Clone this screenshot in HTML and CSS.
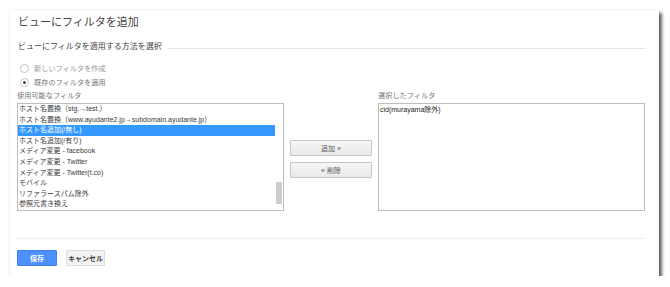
FILE: index.html
```html
<!DOCTYPE html>
<html lang="ja">
<head>
    <meta charset="UTF-8">
    <meta name="viewport" content="width=device-width, initial-scale=1.0">
    <title>ビューにフィルタを追加</title>
    <link rel="stylesheet" href="styles.css">
</head>
<body>

    <div class="dialog">
        <h1 class="dialog-title">ビューにフィルタを追加</h1>

        <!-- Section heading -->
        <div class="section-head">
            <span>ビューにフィルタを適用する方法を選択</span>
            <div class="section-line"></div>
        </div>

        <!-- Options -->
        <label class="radio-row disabled">
            <span class="radio"></span>
            新しいフィルタを作成
        </label>
        <label class="radio-row">
            <span class="radio checked"></span>
            既存のフィルタを適用
        </label>

        <!-- Filter lists -->
        <div class="lists">
            <div class="list-col">
                <div class="list-label">使用可能なフィルタ</div>
                <div class="listbox">
                    <ul class="options">
                        <li>ホスト名置換（stg.→test.）</li>
                        <li>ホスト名置換（www.ayudante2.jp→subdomain.ayudante.jp）</li>
                        <li class="selected">ホスト名追加(/無し)</li>
                        <li>ホスト名追加(/有り)</li>
                        <li>メディア変更 - facebook</li>
                        <li>メディア変更 - Twitter</li>
                        <li>メディア変更 - Twitter(t.co)</li>
                        <li>モバイル</li>
                        <li>リファラースパム除外</li>
                        <li>参照元書き換え</li>
                    </ul>
                    <div class="scrollbar">
                        <div class="thumb"></div>
                    </div>
                </div>
            </div>

            <div class="move-buttons">
                <button class="move-btn">追加 »</button>
                <button class="move-btn">« 削除</button>
            </div>

            <div class="list-col">
                <div class="list-label">選択したフィルタ</div>
                <div class="listbox">
                    <ul class="options chosen">
                        <li>cid(murayama除外)</li>
                    </ul>
                </div>
            </div>
        </div>

        <div class="divider"></div>

        <!-- Footer -->
        <div class="footer">
            <button class="btn btn-save">保存</button>
            <button class="btn btn-cancel">キャンセル</button>
        </div>
    </div>

</body>
</html>
```

FILE: styles.css
```css
body {
    font-family: "Liberation Sans", "Noto Sans CJK JP", sans-serif;
    margin: 0;
    padding: 0;
    background: #fff;
}
.dialog {
    box-sizing: border-box;
    width: 649px;
    height: 266px;
    margin: 10px 0 0 10px;
    padding: 4px 14px 0 7px;
    background: #fff;
    box-shadow: 0 0 2px rgba(0, 0, 0, 0.15), 3px 3px 3px rgba(0, 0, 0, 0.6);
}
.dialog-title {
    margin: 0 0 0 1px;
    font-size: 11px;
    line-height: 16px;
    font-weight: normal;
    color: #444;
}

/* Section heading with rule */
.section-head {
    display: flex;
    align-items: center;
    margin-top: 9px;
    height: 12px;
    font-size: 8px;
    color: #444;
    padding-left: 1px;
}
.section-line {
    flex: 1;
    height: 1px;
    background: #e3e3e3;
    margin: 6px 0 0 6px;
}

/* Radios */
.radio-row {
    display: flex;
    align-items: center;
    height: 14px;
    font-size: 7.2px;
    color: #777;
    padding-left: 3px;
}
.radio-row:first-of-type {
    margin-top: 10px;
}
.radio-row.disabled {
    color: #9a9a9a;
}
.radio {
    box-sizing: border-box;
    width: 9px;
    height: 9px;
    border: 1px solid #c4c4c4;
    border-radius: 50%;
    margin-right: 5px;
    display: flex;
    align-items: center;
    justify-content: center;
}
.radio.checked::after {
    content: "";
    width: 3px;
    height: 3px;
    border-radius: 50%;
    background: #444;
}

/* Lists */
.lists {
    display: flex;
    margin-top: 2px;
}
.list-col {
    width: 267px;
}
.list-label {
    height: 10px;
    line-height: 10px;
    font-size: 7.2px;
    color: #777;
    margin-bottom: 2px;
}
.listbox {
    box-sizing: border-box;
    display: flex;
    height: 108px;
    border: 1px solid #bdbdbd;
    background: #fff;
}
.options {
    list-style: none;
    flex: 1;
    margin: 0 1px 0 0;
    padding: 0;
    overflow: hidden;
    font-size: 7px;
    color: #3a3a3a;
}
.options li {
    height: 10.6px;
    line-height: 10.6px;
    padding-left: 1px;
    white-space: nowrap;
}
.options li.selected {
    background-color: #3399ff;
    color: #fff;
}
.options.chosen li {
    line-height: 12px;
    color: #222;
}
.scrollbar {
    width: 6px;
    margin-right: 1px;
}
.thumb {
    height: 22px;
    margin-top: 78px;
    background: #cdcdcd;
}

/* Move buttons */
.move-buttons {
    width: 94px;
    padding: 49px 6px 0;
    box-sizing: border-box;
    display: flex;
    flex-direction: column;
    gap: 6px;
}
.move-btn {
    height: 16px;
    padding: 0;
    border: 1px solid #c6c6c6;
    border-radius: 1px;
    background: linear-gradient(#f6f6f6, #e9e9e9);
    font-family: inherit;
    font-size: 7px;
    color: #555;
}

.divider {
    height: 1px;
    background: #ebebeb;
    margin-top: 27px;
}

/* Footer buttons */
.footer {
    display: flex;
    gap: 9px;
    margin-top: 11px;
}
.btn {
    height: 16px;
    padding: 0;
    border-radius: 1px;
    font-family: inherit;
    font-size: 7px;
    font-weight: bold;
}
.btn-save {
    width: 40px;
    background-color: #4d90fe;
    border: 1px solid #3d82f0;
    color: #fff;
}
.btn-cancel {
    width: 39px;
    background-color: #f3f3f3;
    border: 1px solid #dcdcdc;
    color: #444;
}
```
